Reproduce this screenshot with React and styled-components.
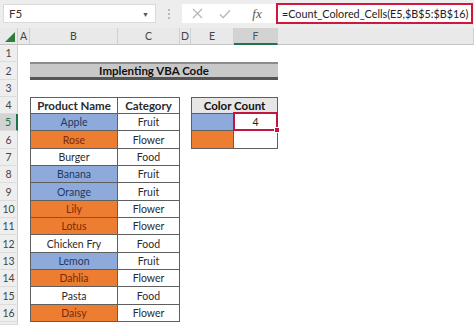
import React from 'react';
import styled, { createGlobalStyle } from 'styled-components';

const GlobalStyle = createGlobalStyle`
  html, body { margin: 0; padding: 0; background: #fff; }
  body { font-family: Lato, "Liberation Sans", sans-serif; }
`;

// excel row heights for rows 1..16 (zoomed sheet, ~17.3px each)
const ROW_HEIGHTS = [17, 18, 17, 17, 17, 18, 17, 17, 18, 17, 17, 18, 17, 17, 18, 17];
const COLUMNS = ['A', 'B', 'C', 'D', 'E', 'F'];

const products = [
  { name: 'Apple', fill: 'blue', cat: 'Fruit' },
  { name: 'Rose', fill: 'orange', cat: 'Flower' },
  { name: 'Burger', fill: 'white', cat: 'Food' },
  { name: 'Banana', fill: 'blue', cat: 'Fruit' },
  { name: 'Orange', fill: 'blue', cat: 'Fruit' },
  { name: 'Lily', fill: 'orange', cat: 'Flower' },
  { name: 'Lotus', fill: 'orange', cat: 'Flower' },
  { name: 'Chicken Fry', fill: 'white', cat: 'Food' },
  { name: 'Lemon', fill: 'blue', cat: 'Fruit' },
  { name: 'Dahlia', fill: 'orange', cat: 'Flower' },
  { name: 'Pasta', fill: 'white', cat: 'Food' },
  { name: 'Daisy', fill: 'orange', cat: 'Flower' },
];

const fills = {
  blue: { bg: '#8eaadb', fg: '#1f3864' },
  orange: { bg: '#ed7d31', fg: '#7a2a08' },
  white: { bg: '#ffffff', fg: '#2b2b2b' },
  grey: { bg: '#e7e6e6', fg: '#111111' },
};

const Window = styled.div`
  width: 474px;
  height: 325px;
  overflow: hidden;
  display: flex;
  flex-direction: column;
  background: #fff;
`;

const FormulaBar = styled.div`
  height: 28px;
  flex: none;
  box-sizing: border-box;
  background: #ededed;
  display: flex;
  align-items: flex-start;
  padding: 4px 1px 0 3px;
`;

const NameBox = styled.div`
  flex: none;
  width: 153px;
  height: 19px;
  box-sizing: border-box;
  background: #fff;
  border: 1px solid #dadada;
  display: flex;
  align-items: center;
  justify-content: space-between;
  padding: 0 6px 0 5px;
  font-size: 11.5px;
  color: #333;
`;

const Caret = styled.span`
  font-size: 7px;
  color: #555;
`;

const Grip = styled.div`
  flex: none;
  width: 26px;
  display: flex;
  flex-direction: column;
  align-items: center;
  gap: 2px;
  padding-top: 5px;
`;

const GripDot = styled.span`
  width: 2px;
  height: 2px;
  background: #b9b9b9;
`;

const ToolBox = styled.div`
  flex: none;
  width: 94px;
  height: 19px;
  background: #fff;
  display: flex;
  align-items: center;
`;

const ToolSlot = styled.div`
  width: ${p => p.$w}px;
  display: flex;
  justify-content: center;
  align-items: center;
  color: #b5b5b5;
`;

const Fx = styled.span`
  font-family: "Liberation Serif", serif;
  font-style: italic;
  font-size: 13px;
  color: #555;
`;

const FormulaInput = styled.div`
  flex: 1;
  min-width: 0;
  overflow: hidden;
  height: 21px;
  margin-top: -1px;
  box-sizing: border-box;
  border: 2px solid #d2173f;
  background: #fff;
  display: flex;
  align-items: center;
  padding-left: 4px;
  font-size: 10.8px;
  color: #222;
  white-space: nowrap;
`;

const Sheet = styled.div`
  flex: 1;
  display: grid;
  grid-template-columns: 18px 12px 88px 62px 11px 43px 44px 1fr;
  grid-template-rows: 17px ${ROW_HEIGHTS.map(h => `${h}px`).join(' ')} 1fr;
`;

const Corner = styled.div`
  background: #e9e9e9;
  border-right: 1px solid #cfcfcf;
  border-bottom: 1px solid #c4c4c4;
  display: flex;
  align-items: flex-end;
  justify-content: flex-end;
  padding: 0 2px 2px 0;
`;

const ColHead = styled.div`
  box-sizing: border-box;
  background: ${p => (p.$selected ? '#d3d3d3' : '#e9e9e9')};
  border-right: 1px solid #d0d0d0;
  border-bottom: ${p => (p.$selected ? '2px solid #217346' : '1px solid #c4c4c4')};
  display: flex;
  align-items: center;
  justify-content: center;
  font-size: 10.5px;
  color: ${p => (p.$selected ? '#555' : '#444')};
`;

const RowHead = styled.div`
  grid-column: 1;
  box-sizing: border-box;
  background: ${p => (p.$selected ? '#d3d3d3' : '#eeeeee')};
  border-right: ${p => (p.$selected ? '2px solid #217346' : '1px solid #cfcfcf')};
  border-bottom: 1px solid #dcdcdc;
  display: flex;
  align-items: center;
  justify-content: center;
  font-size: 10.5px;
  color: ${p => (p.$selected ? '#217346' : '#444')};
`;

const Title = styled.div`
  grid-row: 3;
  grid-column: 3 / 8;
  box-sizing: border-box;
  background: #c8c8c8;
  border-top: 2px solid #8c8c8c;
  border-bottom: 3px solid #555;
  display: flex;
  align-items: center;
  justify-content: center;
  font-weight: 700;
  font-size: 11.5px;
  color: #111;
`;

const Cell = styled.div`
  grid-row: ${p => p.$row};
  grid-column: ${p => p.$col};
  box-sizing: border-box;
  background: ${p => fills[p.$fill].bg};
  color: ${p => fills[p.$fill].fg};
  border-right: 1px solid #5f5f5f;
  border-bottom: 1px solid #5f5f5f;
  border-top: ${p => (p.$top ? '1px solid #5f5f5f' : 'none')};
  border-left: ${p => (p.$left ? '1px solid #5f5f5f' : 'none')};
  display: flex;
  align-items: center;
  justify-content: center;
  font-size: ${p => (p.$bold ? '11.5px' : '10.5px')};
  font-weight: ${p => (p.$bold ? 700 : 400)};
`;

const ActiveCell = styled.div`
  grid-row: 6;
  grid-column: 7;
  position: relative;
  box-sizing: border-box;
  margin: -2px 0 0 -1px;
  border: 2px solid #c0163e;
  background: #fff;
  display: flex;
  align-items: center;
  justify-content: center;
  font-size: 10.5px;
  color: #262626;

  &::after {
    content: '';
    position: absolute;
    right: -4px;
    bottom: -4px;
    width: 4px;
    height: 4px;
    background: #c0163e;
    border: 1px solid #fff;
  }
`;

const CrossIcon = () => (
  <svg width="11" height="11" viewBox="0 0 11 11">
    <path d="M1 1 L10 10 M10 1 L1 10" stroke="currentColor" strokeWidth="1.2" fill="none" />
  </svg>
);

const CheckIcon = () => (
  <svg width="12" height="10" viewBox="0 0 12 10">
    <path d="M1 5.5 L4.2 8.6 L11 1.2" stroke="currentColor" strokeWidth="1.3" fill="none" />
  </svg>
);

const SelectAll = () => (
  <svg width="10" height="10" viewBox="0 0 10 10">
    <polygon points="10,0 10,10 0,10" fill="#2e7d3a" />
  </svg>
);

export default function App() {
  return (
    <Window>
      <GlobalStyle />
      <FormulaBar>
        <NameBox>
          F5
          <Caret>▼</Caret>
        </NameBox>
        <Grip>
          <GripDot />
          <GripDot />
          <GripDot />
        </Grip>
        <ToolBox>
          <ToolSlot $w={30}><CrossIcon /></ToolSlot>
          <ToolSlot $w={26}><CheckIcon /></ToolSlot>
          <ToolSlot $w={38}><Fx>fx</Fx></ToolSlot>
        </ToolBox>
        <FormulaInput>=Count_Colored_Cells(E5,$B$5:$B$16)</FormulaInput>
      </FormulaBar>

      <Sheet>
        <Corner><SelectAll /></Corner>
        {COLUMNS.map(c => (
          <ColHead key={c} $selected={c === 'F'}>{c}</ColHead>
        ))}
        <ColHead />

        {ROW_HEIGHTS.map((_, i) => (
          <RowHead key={i} style={{ gridRow: i + 2 }} $selected={i + 1 === 5}>{i + 1}</RowHead>
        ))}
        <RowHead style={{ gridRow: ROW_HEIGHTS.length + 2 }} />

        <Title>Implenting VBA Code</Title>

        <Cell $row={5} $col={3} $fill="white" $bold $top $left>Product Name</Cell>
        <Cell $row={5} $col={4} $fill="white" $bold $top>Category</Cell>
        {products.map((p, i) => (
          <React.Fragment key={p.name}>
            <Cell $row={i + 6} $col={3} $fill={p.fill} $left>{p.name}</Cell>
            <Cell $row={i + 6} $col={4} $fill="white">{p.cat}</Cell>
          </React.Fragment>
        ))}

        <Cell $row={5} $col="6 / 8" $fill="grey" $bold $top $left>Color Count</Cell>
        <Cell $row={6} $col={6} $fill="blue" $left />
        <ActiveCell>4</ActiveCell>
        <Cell $row={7} $col={6} $fill="orange" $left />
        <Cell $row={7} $col={7} $fill="white" />
      </Sheet>
    </Window>
  );
}
